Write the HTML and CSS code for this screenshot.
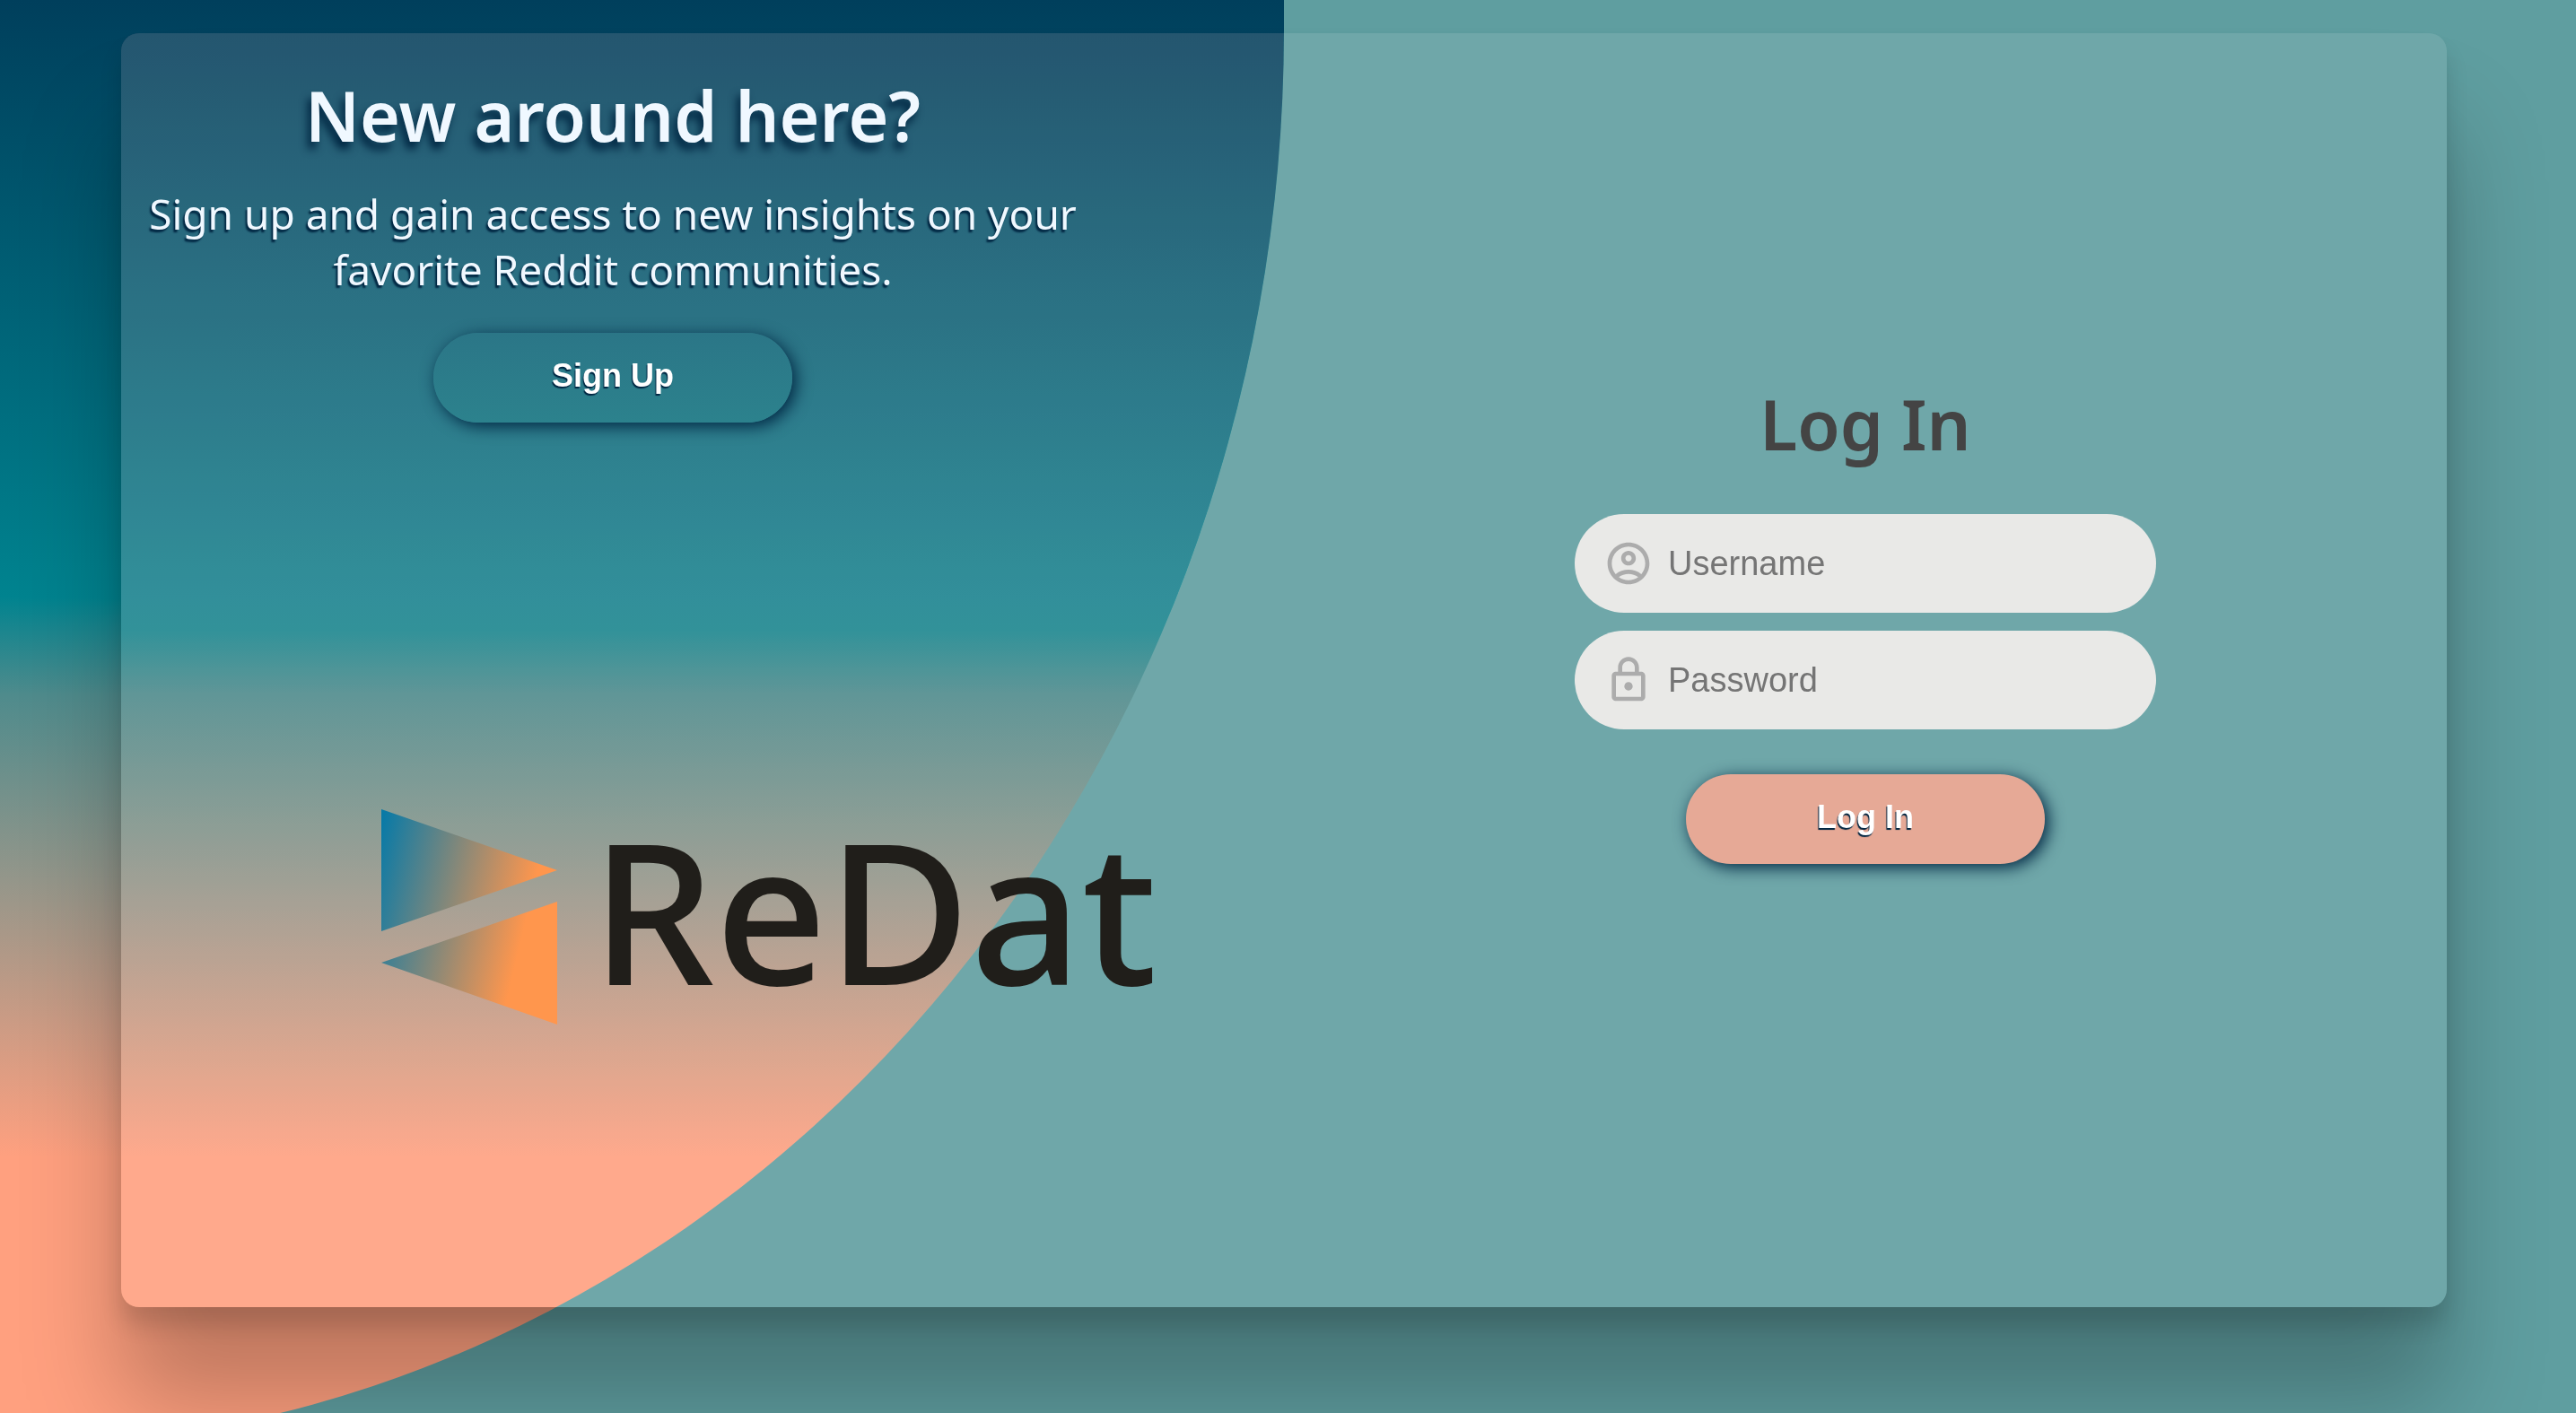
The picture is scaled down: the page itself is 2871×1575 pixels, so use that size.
FILE: index.html
```html
<!DOCTYPE html>
<html lang="en">
<head>
<meta charset="utf-8">
<meta name="viewport" content="width=device-width, initial-scale=1">
<title>ReDat – Log In</title>
<link rel="stylesheet" href="styles.css">
</head>
<body>
<main class="page">
  <div class="backdrop"></div>
  <div class="card">
    <section class="welcome">
      <h1 class="title title-light">New around here?</h1>
      <p class="lead">Sign up and gain access to new insights on your favorite Reddit communities.</p>
      <button class="btn btn-outline" type="button">Sign Up</button>
      <div class="logo">
        <svg class="logo-mark" viewBox="0 0 196 240" aria-hidden="true">
          <defs>
            <linearGradient id="mark" gradientUnits="userSpaceOnUse" x1="0" y1="20" x2="176" y2="62">
              <stop offset="0" stop-color="#0a7aa6"/>
              <stop offset="1" stop-color="#ff964d"/>
            </linearGradient>
          </defs>
          <path fill="url(#mark)" d="M0 0 196 68 0 136ZM196 103V240L0 171Z"/>
        </svg>
        <span class="logo-text">ReDat</span>
      </div>
    </section>
    <form class="login">
      <h2 class="title title-form">Log In</h2>
      <label class="field">
        <svg class="icon" viewBox="0 0 24 24" aria-hidden="true"><path d="M12 2C6.480 2 2 6.480 2 12s4.480 10 10 10 10-4.480 10-10S17.520 2 12 2ZM7.350 18.500C8.660 17.560 10.260 17 12 17s3.340.560 4.650 1.500C15.340 19.440 13.740 20 12 20s-3.340-.560-4.650-1.500Zm10.790-1.380C16.450 15.800 14.320 15 12 15s-4.450.800-6.140 2.120C4.700 15.730 4 13.950 4 12c0-4.420 3.580-8 8-8s8 3.580 8 8c0 1.950-.700 3.730-1.860 5.120ZM12 6c-1.930 0-3.500 1.570-3.500 3.500S10.070 13 12 13s3.500-1.570 3.500-3.500S13.930 6 12 6Zm0 5c-.830 0-1.500-.670-1.500-1.500S11.170 8 12 8s1.500.670 1.500 1.500S12.830 11 12 11Z"/></svg>
        <input class="input" type="text" placeholder="Username" aria-label="Username">
      </label>
      <label class="field">
        <svg class="icon" viewBox="0 0 24 24" aria-hidden="true"><path d="M18 8h-1V6c0-2.760-2.240-5-5-5S7 3.240 7 6v2H6c-1.100 0-2 .900-2 2v10c0 1.100.900 2 2 2h12c1.100 0 2-.900 2-2V10c0-1.100-.900-2-2-2ZM9 6c0-1.660 1.340-3 3-3s3 1.340 3 3v2H9V6Zm9 14H6V10h12v10Zm-6-3c1.100 0 2-.900 2-2s-.900-2-2-2-2 .900-2 2 .900 2 2 2Z"/></svg>
        <input class="input" type="password" placeholder="Password" aria-label="Password">
      </label>
      <button class="btn btn-solid" type="submit">Log In</button>
    </form>
  </div>
</main>
</body>
</html>
```
FILE: styles.css
```css
* { box-sizing: border-box; }

body {
  margin: 0;
  background: #5f9ea0;
  font-family: "Noto Sans", "Open Sans", sans-serif;
}

.page {
  position: relative;
  min-height: 100vh;
  padding: 37px 144px 0 135px;
  overflow: hidden;
}

/* Quarter of an ellipse that sweeps over the left half of the page */
.backdrop {
  position: absolute;
  inset: 0 calc(50% + 5px) -38px 0;
  border-bottom-right-radius: 100% 98%;
  background: linear-gradient(#003f5c 0, #00838f 665px, #4f8b8c 775px, #94968a 980px, #ffa07f 1290px);
}

.card {
  position: relative;
  display: grid;
  grid-template-columns: repeat(2, minmax(0, 1fr));
  min-height: calc(100vh - 155px);
  border-radius: 20px;
  background: rgba(255, 255, 255, .1);
  box-shadow: 0 20px 24px rgba(0, 0, 0, .14), 0 108px 110px rgba(0, 0, 0, .25);
}

/* Warms the dark blues seen through the card */
.card::before {
  content: "";
  position: absolute;
  inset: 0;
  border-radius: inherit;
  background: linear-gradient(#240000, #320000 45%);
  mix-blend-mode: lighten;
}

.welcome,
.login {
  position: relative;
  display: flex;
  flex-direction: column;
  align-items: center;
}

.welcome {
  padding: 38px 200px 0 0;
  color: #f0f8ff;
  text-align: center;
}

.title {
  margin: 0;
  color: #444;
  font-size: 77px;
  font-weight: 600;
  line-height: 108px;
}

.title-light {
  color: #f0f8ff;
  text-shadow: -4px 8px 10px #002642;
}

.title-form { margin-bottom: 26px; }

.lead {
  max-width: 1060px;
  margin: 24px 0 40px;
  font-size: 46px;
  line-height: 62px;
  text-shadow: -2px 3px 2px #002642;
}

.btn {
  width: 400px;
  height: 100px;
  padding: 0 0 4px;
  border: 0;
  border-radius: 50px;
  color: #fff;
  font: bold 36px "Liberation Sans", Arial, sans-serif;
  text-shadow: -1px 2px 1px #002642;
  box-shadow: 4px 4px 18px #002642;
}

.btn-outline { background: linear-gradient(#2b7687, #2c828d); }

.btn-solid {
  margin-top: 30px;
  background: #e6a996;
}

.logo {
  display: flex;
  align-self: flex-start;
  align-items: flex-start;
  gap: 38px;
  margin: 431px 0 0 290px;
}

.logo-mark {
  flex: none;
  width: 196px;
  height: 240px;
}

.logo-text {
  color: #201e1a;
  font-size: 218px;
  font-weight: 500;
  line-height: 224px;
}

.login {
  justify-content: center;
  gap: 20px;
  padding-bottom: 112px;
}

.field {
  display: flex;
  align-items: center;
  gap: 16px;
  width: 648px;
  height: 110px;
  padding: 0 32px;
  border-radius: 55px;
  background: #e9e9e7;
}

.icon {
  flex: none;
  width: 56px;
  height: 56px;
  fill: #acacac;
}

.input {
  flex: 1;
  min-width: 0;
  padding: 0;
  border: 0;
  outline: 0;
  background: none;
  color: #333;
  font: 38px "Liberation Sans", Arial, sans-serif;
}

.input::placeholder { color: #757575; }
```
